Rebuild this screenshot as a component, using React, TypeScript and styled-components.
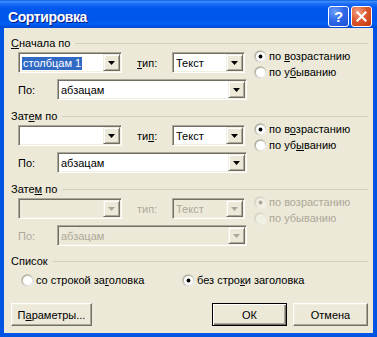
import React, { useId } from "react";
import styled, { createGlobalStyle } from "styled-components";

const Global = createGlobalStyle`
  html, body { margin: 0; padding: 0; background: #fff; }
  body {
    font-family: "Liberation Sans", Arial, sans-serif;
    font-size: 11px;
    color: #000;
  }
`;

const Window = styled.div`
  width: 377px;
  height: 337px;
  display: flex;
  flex-direction: column;
  background: #0054e3;
`;

const TitleBar = styled.div`
  height: 30px;
  box-sizing: border-box;
  padding: 5px 5px 0 8px;
  display: flex;
  align-items: center;
  background: linear-gradient(
    to bottom,
    #0a5fdc 0%,
    #3d8efe 6%,
    #1a6af6 14%,
    #0058ee 30%,
    #0056ea 70%,
    #0060f5 85%,
    #0047d0 100%
  );
`;

const Title = styled.div`
  flex: 1;
  font-weight: bold;
  font-size: 14px;
  color: #fff;
  text-shadow: 1px 1px 0 #0a1883;
  letter-spacing: -0.4px;
`;

const CaptionButtons = styled.div`
  display: flex;
  gap: 2px;
`;

const CaptionButton = styled.div<{ $kind: "help" | "close" }>`
  width: 21px;
  height: 21px;
  box-sizing: border-box;
  border: 1px solid #fff;
  border-radius: 3px;
  display: flex;
  align-items: center;
  justify-content: center;
  color: #fff;
  font-weight: bold;
  font-size: 15px;
  background: ${(p) =>
    p.$kind === "help"
      ? "radial-gradient(circle at 30% 25%, #6f9ffb 0%, #2f6ae8 45%, #1c4fd3 100%)"
      : "radial-gradient(circle at 30% 25%, #f0a084 0%, #dd5a30 45%, #c2350b 100%)"};
`;

const Client = styled.div`
  flex: 1;
  margin: 0 4px 4px 4px;
  background: #ece9d8;
  padding: 9px 5px 7px 7px;
  display: flex;
  flex-direction: column;
`;

const Group = styled.div<{ $gap?: number }>`
  margin-top: ${(p) => p.$gap ?? 0}px;
`;

const GroupHeader = styled.div`
  display: flex;
  align-items: center;
  gap: 5px;
  height: 13px;
  line-height: 13px;
`;

const GroupLine = styled.div`
  flex: 1;
  height: 1px;
  background: #d0d0bf;
`;

const U = styled.span`
  text-decoration: underline;
`;

const GroupBody = styled.div`
  margin-top: 2px;
  padding-left: 7px;
  display: flex;
`;

const LeftCol = styled.div`
  width: 229px;
  display: flex;
  flex-direction: column;
  gap: 6px;
`;

const Row = styled.div`
  display: flex;
  align-items: center;
`;

const Label = styled.div<{ $w: number; $ml?: number; $disabled?: boolean }>`
  width: ${(p) => p.$w}px;
  margin-left: ${(p) => p.$ml ?? 0}px;
  flex: none;
  color: ${(p) => (p.$disabled ? "#aca899" : "#000")};
`;

const ComboBox = styled.div<{ $w: number; $disabled?: boolean }>`
  width: ${(p) => p.$w}px;
  height: 21px;
  box-sizing: border-box;
  flex: none;
  display: flex;
  align-items: center;
  padding: 1px;
  background: ${(p) => (p.$disabled ? "#ece9d8" : "#fff")};
  border: 1px solid;
  border-color: #aca899 #fff #fff #aca899;
  box-shadow: inset 1px 1px 0 #716f64, inset -1px -1px 0 #f1efe2;
  color: ${(p) => (p.$disabled ? "#aca899" : "#000")};
`;

const ComboText = styled.div`
  flex: 1;
  padding-left: 2px;
  line-height: 14px;
  white-space: nowrap;
  overflow: hidden;
`;

const Selection = styled.span`
  background: #316ac5;
  color: #fff;
  padding: 0 1px 1px 1px;
`;

const DropButton = styled.div`
  width: 17px;
  height: 17px;
  box-sizing: border-box;
  flex: none;
  display: flex;
  align-items: center;
  justify-content: center;
  background: #ece9d8;
  border: 1px solid;
  border-color: #f1efe2 #716f64 #716f64 #f1efe2;
  box-shadow: inset 1px 1px 0 #fff, inset -1px -1px 0 #aca899;
`;

const RadioCol = styled.div`
  margin-left: 7px;
  margin-top: -4px;
  display: flex;
  flex-direction: column;
`;

const RadioItem = styled.div<{ $disabled?: boolean; $w?: number }>`
  display: flex;
  align-items: center;
  gap: 2px;
  height: 16px;
  width: ${(p) => (p.$w ? `${p.$w}px` : "auto")};
  flex: none;
  color: ${(p) => (p.$disabled ? "#aca899" : "#000")};
`;

const ListBody = styled.div`
  margin-top: 4px;
  padding-left: 10px;
  display: flex;
`;

const ButtonRow = styled.div`
  margin-top: 15px;
  display: flex;
  gap: 6px;
`;

const Spacer = styled.div`
  flex: 1;
`;

const Button = styled.div<{ $w: number; $default?: boolean }>`
  width: ${(p) => p.$w}px;
  height: 23px;
  box-sizing: border-box;
  display: flex;
  align-items: center;
  justify-content: center;
  background: #ece9d8;
  border: 1px solid;
  border-color: ${(p) =>
    p.$default ? "#000" : "#fff #716f64 #716f64 #fff"};
  box-shadow: ${(p) =>
    p.$default
      ? "inset 1px 1px 0 #fff, inset -1px -1px 0 #716f64, inset -2px -2px 0 #aca899"
      : "inset -1px -1px 0 #aca899, inset 1px 1px 0 #f1efe2"};
`;

const Arrow = ({ disabled }: { disabled?: boolean }) => (
  <svg width="7" height="4" viewBox="0 0 7 4">
    <polygon points="0,0 7,0 3.5,4" fill={disabled ? "#aca899" : "#000"} />
  </svg>
);

const Combo = ({
  w,
  children,
  disabled,
}: {
  w: number;
  children?: React.ReactNode;
  disabled?: boolean;
}) => (
  <ComboBox $w={w} $disabled={disabled}>
    <ComboText>{children}</ComboText>
    <DropButton>
      <Arrow disabled={disabled} />
    </DropButton>
  </ComboBox>
);

const RadioMark = ({ checked, disabled }: { checked?: boolean; disabled?: boolean }) => {
  const id = useId();
  return (
    <svg width="13" height="13" viewBox="0 0 13 13">
      <defs>
        <linearGradient id={id} x1="0" y1="0" x2="1" y2="1">
          <stop offset="0" stopColor={disabled ? "#c9c7ba" : "#9c9a8c"} />
          <stop offset="0.5" stopColor={disabled ? "#e2e0d2" : "#cfcdc0"} />
          <stop offset="1" stopColor="#ffffff" />
        </linearGradient>
      </defs>
      <circle cx="6.5" cy="6.5" r="6.2" fill={`url(#${id})`} />
      <circle cx="6.5" cy="6.5" r="4.6" fill={disabled ? "#f1efe2" : "#fff"} />
      {checked && <circle cx="6.5" cy="6.5" r="1.9" fill={disabled ? "#aca899" : "#000"} />}
    </svg>
  );
};

const Radio = ({
  checked,
  disabled,
  w,
  children,
}: {
  checked?: boolean;
  disabled?: boolean;
  w?: number;
  children: React.ReactNode;
}) => (
  <RadioItem $disabled={disabled} $w={w}>
    <RadioMark checked={checked} disabled={disabled} />
    <span>{children}</span>
  </RadioItem>
);

export default function App() {
  return (
    <>
      <Global />
      <Window>
        <TitleBar>
          <Title>Сортировка</Title>
          <CaptionButtons>
            <CaptionButton $kind="help">?</CaptionButton>
            <CaptionButton $kind="close">
              <svg width="11" height="11" viewBox="0 0 11 11">
                <path d="M1.5 1.5 L9.5 9.5 M9.5 1.5 L1.5 9.5" stroke="#fff" strokeWidth="2.2" strokeLinecap="square" />
              </svg>
            </CaptionButton>
          </CaptionButtons>
        </TitleBar>
        <Client>
          <Group>
            <GroupHeader>
              <span>
                <U>С</U>начала по
              </span>
              <GroupLine />
            </GroupHeader>
            <GroupBody>
              <LeftCol>
                <Row>
                  <Combo w={104}>
                    <Selection>столбцам 1</Selection>
                  </Combo>
                  <Label $w={35} $ml={15}>
                    <U>т</U>ип:
                  </Label>
                  <Combo w={73}>Текст</Combo>
                </Row>
                <Row>
                  <Label $w={39}>По:</Label>
                  <Combo w={190}>абзацам</Combo>
                </Row>
              </LeftCol>
              <RadioCol>
                <Radio checked>
                  по <U>в</U>озрастанию
                </Radio>
                <Radio>
                  по у<U>б</U>ыванию
                </Radio>
              </RadioCol>
            </GroupBody>
          </Group>

          <Group $gap={10}>
            <GroupHeader>
              <span>
                Зат<U>е</U>м по
              </span>
              <GroupLine />
            </GroupHeader>
            <GroupBody>
              <LeftCol>
                <Row>
                  <Combo w={104} />
                  <Label $w={35} $ml={15}>
                    ти<U>п</U>:
                  </Label>
                  <Combo w={73}>Текст</Combo>
                </Row>
                <Row>
                  <Label $w={39}>По:</Label>
                  <Combo w={190}>абзацам</Combo>
                </Row>
              </LeftCol>
              <RadioCol>
                <Radio checked>
                  по в<U>о</U>зрастанию
                </Radio>
                <Radio>
                  по уб<U>ы</U>ванию
                </Radio>
              </RadioCol>
            </GroupBody>
          </Group>

          <Group $gap={10}>
            <GroupHeader>
              <span>
                Зате<U>м</U> по
              </span>
              <GroupLine />
            </GroupHeader>
            <GroupBody>
              <LeftCol>
                <Row>
                  <Combo w={104} disabled />
                  <Label $w={35} $ml={15} $disabled>
                    тип:
                  </Label>
                  <Combo w={73} disabled>
                    Текст
                  </Combo>
                </Row>
                <Row>
                  <Label $w={39} $disabled>
                    По:
                  </Label>
                  <Combo w={190} disabled>
                    абзацам
                  </Combo>
                </Row>
              </LeftCol>
              <RadioCol>
                <Radio checked disabled>
                  по возрастанию
                </Radio>
                <Radio disabled>по убыванию</Radio>
              </RadioCol>
            </GroupBody>
          </Group>

          <Group $gap={9}>
            <GroupHeader>
              <span>Список</span>
              <GroupLine />
            </GroupHeader>
            <ListBody>
              <Radio w={161}>
                со строкой за<U>г</U>оловка
              </Radio>
              <Radio checked>
                без стро<U>к</U>и заголовка
              </Radio>
            </ListBody>
          </Group>

          <ButtonRow>
            <Button $w={81}>
              <span>
                П<U>а</U>раметры...
              </span>
            </Button>
            <Spacer />
            <Button $w={75} $default>
              ОК
            </Button>
            <Button $w={75}>Отмена</Button>
          </ButtonRow>
        </Client>
      </Window>
    </>
  );
}
